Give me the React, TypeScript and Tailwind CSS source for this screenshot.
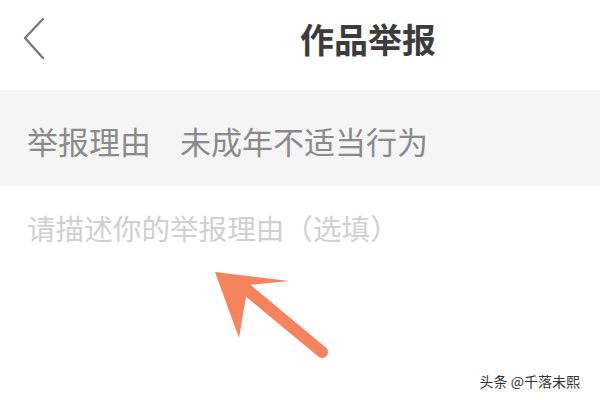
import React from 'react';

const cjk = "font-['Noto_Sans_CJK_SC','Noto_Sans',sans-serif]";

const BackIcon = () => (
  <svg width="24" height="44" viewBox="0 0 24 44" fill="none">
    <path d="M21 2 L3 21 L21 41" stroke="#7a7a7a" strokeWidth="2.4" strokeLinecap="round" strokeLinejoin="round" />
  </svg>
);

const Arrow = () => (
  <svg width="140" height="115" viewBox="0 0 140 115" fill="none">
    <path d="M14 21 L88 30 L47 34 L38 87 Z" fill="#f5835e" />
    <path d="M44 37 L121 101" stroke="#f5835e" strokeWidth="12" strokeLinecap="round" />
  </svg>
);

export default function App() {
  return (
    <div className={`relative w-[600px] h-[400px] bg-white overflow-hidden ${cjk}`}>
      {/* header */}
      <div className="flex h-[90px] items-center pb-[12px] pl-[22px]">
        <BackIcon />
        <h1 className="ml-[254px] text-[34px] leading-none font-bold text-[#3c3c3c]">作品举报</h1>
      </div>

      {/* reason row */}
      <div className="flex h-[96px] bg-[#f5f5f5] pl-[27px] pt-[35px] text-[31px] leading-none text-[#8a8a8a]">
        <span>举报理由</span>
        <span className="ml-[29px]">未成年不适当行为</span>
      </div>

      {/* description input */}
      <div className="pl-[27px] pt-[28px]">
        <p className="text-[28.6px] leading-none text-[#d0d0d0]">请描述你的举报理由（选填）</p>
      </div>

      <div className="absolute left-[201px] top-[251px]">
        <Arrow />
      </div>

      <div className="absolute right-[20px] bottom-[12px] text-[14px] leading-none text-[#333]">
        头条 @千落未熙
      </div>
    </div>
  );
}
